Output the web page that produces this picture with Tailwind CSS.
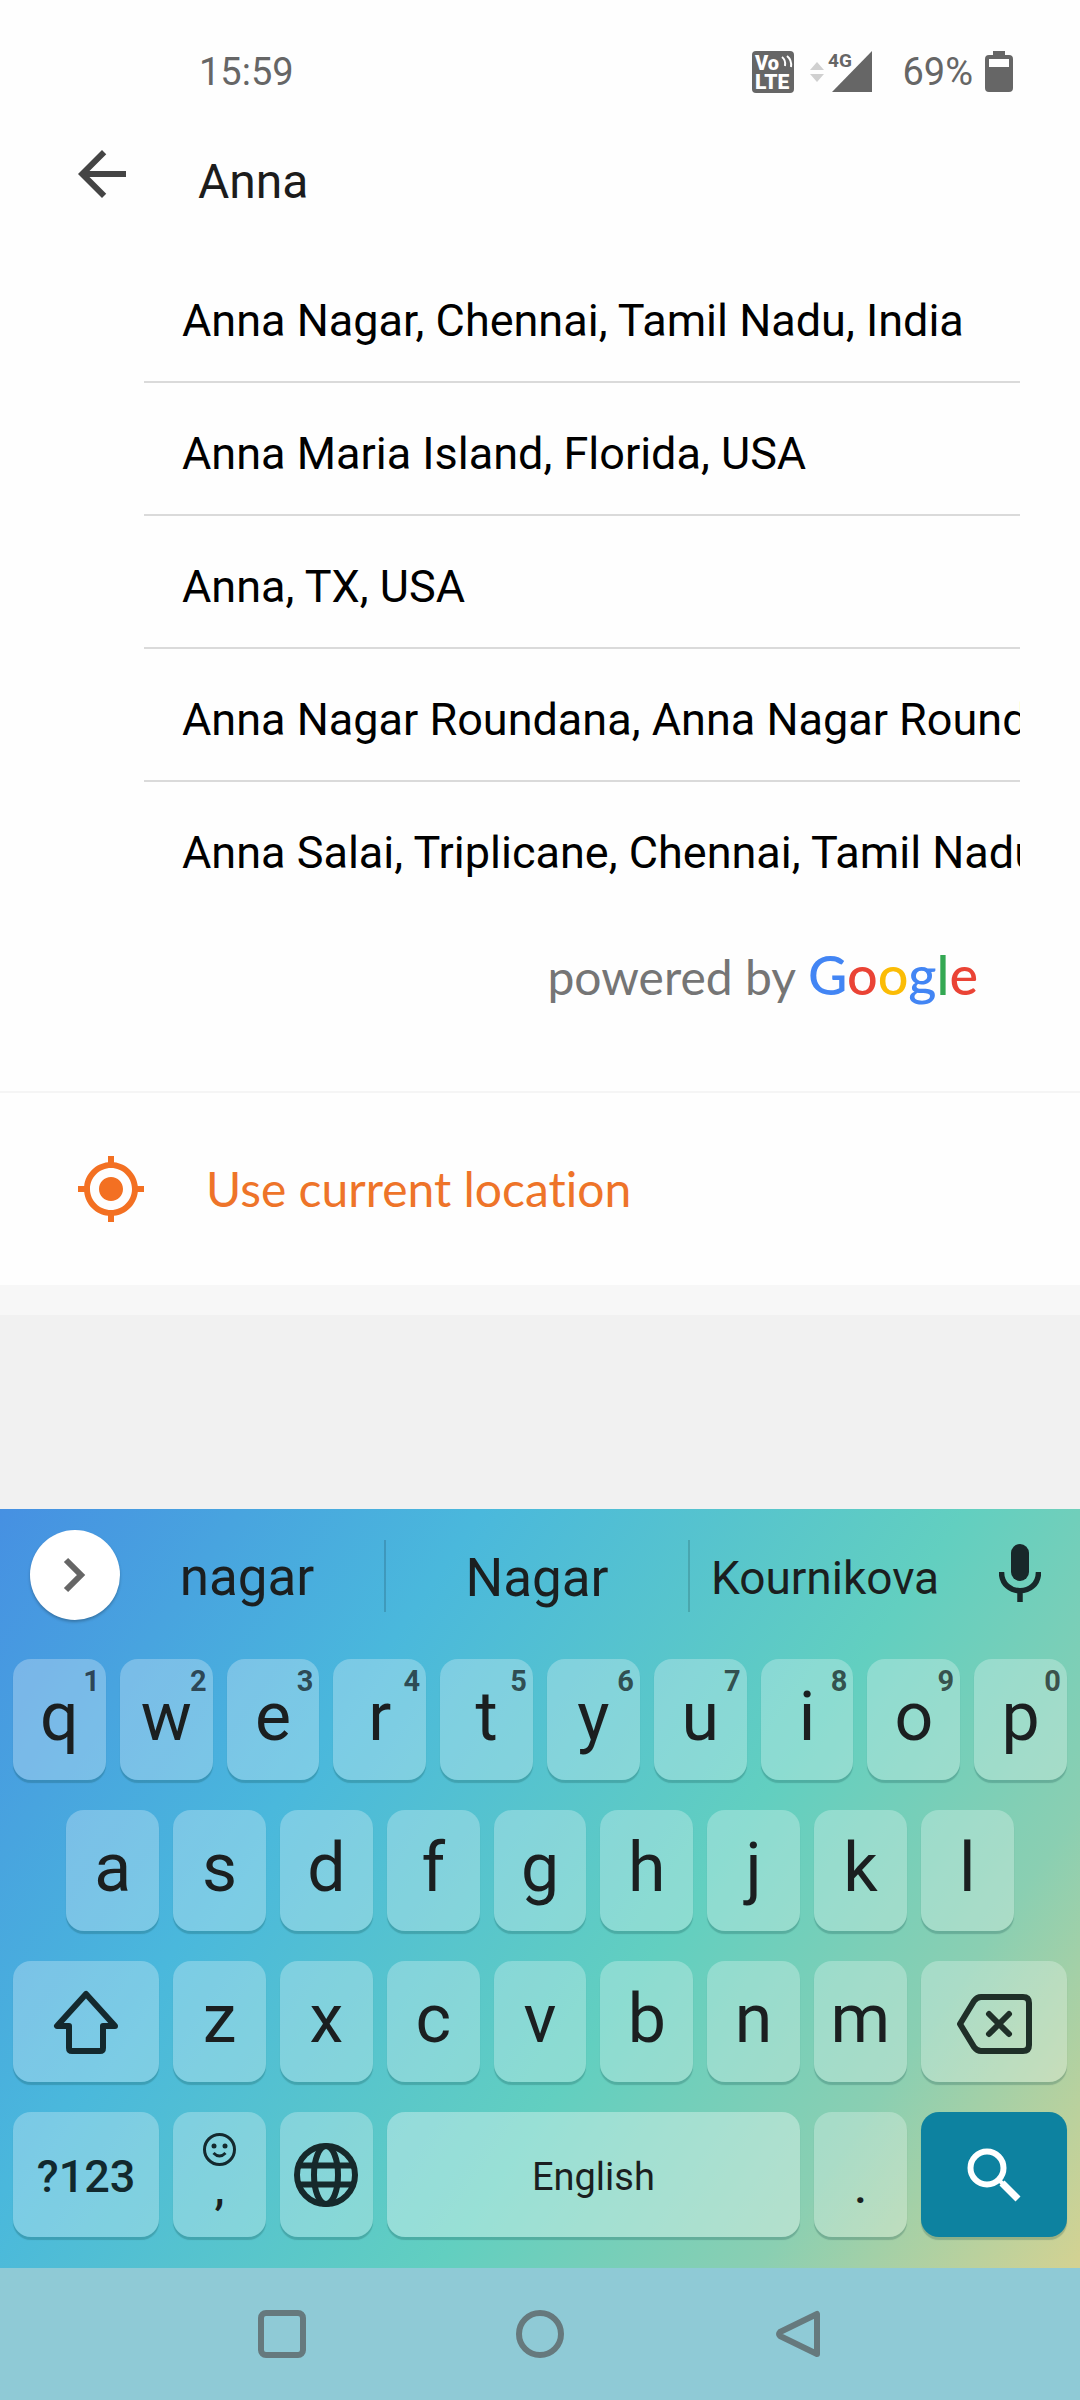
<!DOCTYPE html>
<html lang="en">
<head>
<meta charset="utf-8">
<meta name="viewport" content="width=device-width, initial-scale=1">
<title>Search location</title>
<script src="https://cdn.jsdelivr.net/npm/@tailwindcss/browser@4"></script>
</head>
<body class="flex min-h-screen flex-col bg-[#f1f1f1] font-[Roboto,sans-serif] text-black">

<div class="bg-[#fefefe]">
  <!-- Status bar -->
  <div class="flex h-36 items-center pr-[67px] pl-[199px] text-[38px] leading-none text-[#666]">
    <time class="mr-auto">15:59</time>
    <svg class="h-[42px] w-[42px]" viewBox="0 0 42 42" role="img" aria-label="VoLTE">
      <rect width="42" height="42" rx="4" fill="#666"/>
      <text x="3" y="19" font-family="Roboto" font-weight="900" font-size="20" fill="#fff">Vo</text>
      <text x="3" y="38" font-family="Roboto" font-weight="900" font-size="21" fill="#fff">LTE</text>
      <path d="M30 6q4 3 3 9M35 5q5 4 4 11" fill="none" stroke="#fff" stroke-width="2"/>
    </svg>
    <svg class="ml-4 h-[42px] w-[62px]" viewBox="0 0 62 42" role="img" aria-label="4G signal">
      <path d="M0 19l7-8 7 8zM0 23l7 8 7-8z" fill="#d0d0d0"/>
      <path d="M62 0v41H22z" fill="#666"/>
      <text x="18" y="16" font-family="Roboto" font-weight="700" font-size="19" fill="#666">4G</text>
    </svg>
    <span class="ml-[30px]">69%</span>
    <svg class="ml-3 h-[42px] w-7" viewBox="0 0 28 42" role="img" aria-label="Battery">
      <path d="M8 0h12v4h4q4 0 4 4v29q0 4-4 4H4q-4 0-4-4V8q0-4 4-4h4zM4 8v8h20V8z" fill="#666" fill-rule="evenodd"/>
    </svg>
  </div>

  <!-- Search header -->
  <header class="flex h-[106px] items-start pr-15 pl-[78px]">
    <button class="flex h-15 w-12 items-center" aria-label="Back">
      <svg class="size-12" viewBox="4 4 16 16" fill="#444"><path d="M20 11H7.83l5.59-5.59L12 4l-8 8 8 8 1.41-1.41L7.83 13H20v-2z"/></svg>
    </button>
    <input class="ml-18 h-[74px] min-w-0 flex-1 bg-transparent text-[48px] text-[#1c1c1c] outline-none" type="text" value="Anna" aria-label="Location">
  </header>

  <!-- Suggested places -->
  <ul class="mr-15 ml-36 text-[45px] whitespace-nowrap [&>li]:flex [&>li]:h-[133px] [&>li]:items-center [&>li]:overflow-hidden [&>li]:border-b-2 [&>li]:border-[#dadada] [&>li]:pt-2.5 [&>li]:pl-[38px] [&>li:last-child]:border-transparent">
    <li>Anna Nagar, Chennai, Tamil Nadu, India</li>
    <li>Anna Maria Island, Florida, USA</li>
    <li>Anna, TX, USA</li>
    <li>Anna Nagar Roundana, Anna Nagar Roundana</li>
    <li>Anna Salai, Triplicane, Chennai, Tamil Nadu</li>
  </ul>

  <p class="flex h-[178px] items-baseline justify-end gap-3 border-b-2 border-[#f5f5f5] pt-[19px] pr-[102px] font-[Lato,sans-serif] text-[48px] text-[#757575]">
    <span>powered by</span>
    <span class="text-[54px] font-medium"><span class="text-[#4285f4]">G</span><span class="text-[#ea4335]">o</span><span class="text-[#fbbc05]">o</span><span class="text-[#4285f4]">g</span><span class="text-[#34a853]">l</span><span class="text-[#ea4335]">e</span></span>
  </p>

  <button class="flex h-48 w-full items-center gap-[62px] pl-[78px] font-[Lato,sans-serif] text-[48px] text-[#ee7429] [font-variant-ligatures:none]">
    <svg class="size-[66px]" viewBox="1 1 22 22" fill="#f37022"><path d="M12 8c-2.21 0-4 1.79-4 4s1.79 4 4 4 4-1.79 4-4-1.79-4-4-4zm8.94 3c-.46-4.17-3.77-7.48-7.94-7.94V1h-2v2.06C6.83 3.52 3.52 6.83 3.06 11H1v2h2.06c.46 4.17 3.77 7.48 7.94 7.94V23h2v-2.06c4.17-.46 7.48-3.77 7.94-7.94H23v-2h-2.06zM12 19c-3.87 0-7-3.13-7-7s3.13-7 7-7 7 3.13 7 7-3.13 7-7 7z"/></svg>
    Use current location
  </button>
</div>
<div class="h-[30px] bg-[#f7f7f7]"></div>

<!-- Keyboard -->
<section class="mt-auto bg-[linear-gradient(125deg,#4690e2_0%,#4ab8dc_30%,#62cfc0_60%,#8acfb2_80%,#d4d292_100%)] pb-[31px] text-[#1b1f20]" aria-label="Keyboard">
  <div class="flex h-[150px] items-start pt-[21px]">
    <button class="ml-[30px] flex size-[90px] shrink-0 items-center justify-center rounded-full bg-white shadow-[0_2px_3px_rgba(0,0,0,0.25)]" aria-label="Expand toolbar">
      <svg class="h-9 w-6" viewBox="0 0 24 36" fill="none" stroke="#666" stroke-width="6"><path d="M3 3l15 15L3 33"/></svg>
    </button>
    <div class="-ml-2.5 grid h-[92px] flex-1 grid-cols-[274fr_306fr_270fr] items-center text-[53px]">
      <button class="pt-1">nagar</button>
      <button class="h-18 border-x-2 border-black/15 pt-1 leading-none">Nagar</button>
      <button class="pt-1 text-[46px]">Kournikova</button>
    </div>
    <button class="flex h-[86px] w-[120px] items-center justify-center" aria-label="Voice input">
      <svg class="h-[60px] w-[42px]" viewBox="0 0 42 60"><rect x="12" y="1" width="18" height="37" rx="9" fill="#18282a"/><path d="M2.500 29c0 25 37 25 37 0M21 46v13" fill="none" stroke="#18282a" stroke-width="5.500"/></svg>
    </button>
  </div>

  <div class="grid grid-cols-20 gap-x-3.5 gap-y-[30px] px-[13px] text-[68px] leading-none [&>button]:relative [&>button]:col-span-2 [&>button]:flex [&>button]:h-[121px] [&>button]:items-center [&>button]:justify-center [&>button]:rounded-[18px] [&>button]:bg-white/27 [&>button]:pb-1.5 [&>button]:shadow-[0_3px_1px_rgba(0,60,60,0.22)] [&_small]:absolute [&_small]:top-2 [&_small]:right-1.5 [&_small]:text-[29px] [&_small]:leading-none [&_small]:font-bold [&_small]:text-black/65">
    <button>q<small>1</small></button>
    <button>w<small>2</small></button>
    <button>e<small>3</small></button>
    <button>r<small>4</small></button>
    <button>t<small>5</small></button>
    <button>y<small>6</small></button>
    <button>u<small>7</small></button>
    <button>i<small>8</small></button>
    <button>o<small>9</small></button>
    <button>p<small>0</small></button>

    <button class="col-start-2!">a</button>
    <button>s</button>
    <button>d</button>
    <button>f</button>
    <button>g</button>
    <button>h</button>
    <button>j</button>
    <button>k</button>
    <button>l</button>

    <button class="col-span-3! col-start-1! pb-0!" aria-label="Shift">
      <svg class="h-16 w-[66px]" viewBox="0 0 66 64" fill="none" stroke="#14292e" stroke-width="6" stroke-linejoin="round"><path d="M33 4L4 36h12v22q0 3 3 3h28q3 0 3-3V36h12z"/></svg>
    </button>
    <button>z</button>
    <button>x</button>
    <button>c</button>
    <button>v</button>
    <button>b</button>
    <button>n</button>
    <button>m</button>
    <button class="col-span-3! pt-1 pb-0!" aria-label="Backspace">
      <svg class="h-15 w-19" viewBox="0 0 76 60" fill="none" stroke="#1f2f28" stroke-width="6" stroke-linejoin="round" stroke-linecap="round"><path d="M4 30L18 7q3-4 7-4h42q6 0 6 6v42q0 6-6 6H25q-4 0-7-4zM33 20l20 20M53 20L33 40"/></svg>
    </button>

    <button class="col-span-3! h-[125px]! pt-1 pb-0! text-[45px] font-medium text-[#12292e]">?123</button>
    <button class="h-[125px]! flex-col" aria-label="Emoji and comma">
      <svg class="size-[33px]" viewBox="0 0 33 33" fill="none" stroke="#14292e" stroke-width="3"><circle cx="16.500" cy="16.500" r="15"/><path d="M10.500 20q6 6 12 0"/><circle cx="11" cy="13" r="2.500" fill="#14292e" stroke="none"/><circle cx="22" cy="13" r="2.500" fill="#14292e" stroke="none"/></svg>
      <span class="text-[45px] leading-none font-medium">,</span>
    </button>
    <button class="h-[125px]! pb-0!" aria-label="Change language">
      <svg class="size-16" viewBox="0 0 64 64" fill="none" stroke="#16292b" stroke-width="6"><circle cx="32" cy="32" r="29"/><ellipse cx="32" cy="32" rx="12" ry="29"/><path d="M5 22.500h54M5 41.500h54"/></svg>
    </button>
    <button class="col-span-8! h-[125px]! bg-white/35! pt-1 pb-0! text-[38px]">English</button>
    <button class="h-[125px]! text-[45px]"><span class="pt-8 font-medium">.</span></button>
    <button class="col-span-3! h-[125px]! bg-[#0d82a0]! pb-0!" aria-label="Search">
      <svg class="size-[54px]" viewBox="0 0 54 54" fill="none" stroke="#fff" stroke-width="6"><circle cx="20" cy="20" r="16.500"/><path d="M33 33l3 3" stroke-width="4"/><path d="M35 35l16 16" stroke-width="7"/></svg>
    </button>
  </div>
</section>

<!-- Navigation bar -->
<nav class="grid h-33 grid-cols-3 place-items-center bg-[#8fcad6] px-[153px]" aria-label="System">
  <button aria-label="Recent apps"><svg class="size-12" viewBox="0 0 48 48" fill="none" stroke="#66797d" stroke-width="6"><rect x="3" y="3" width="42" height="42" rx="5"/></svg></button>
  <button aria-label="Home"><svg class="size-12" viewBox="0 0 48 48" fill="none" stroke="#66797d" stroke-width="6"><circle cx="24" cy="24" r="21"/></svg></button>
  <button aria-label="Back"><svg class="size-12" viewBox="0 0 48 48" fill="none" stroke="#66797d" stroke-width="6" stroke-linejoin="round"><path d="M43 4v40L6 26q-2-2 0-4z"/></svg></button>
</nav>
</body>
</html>
